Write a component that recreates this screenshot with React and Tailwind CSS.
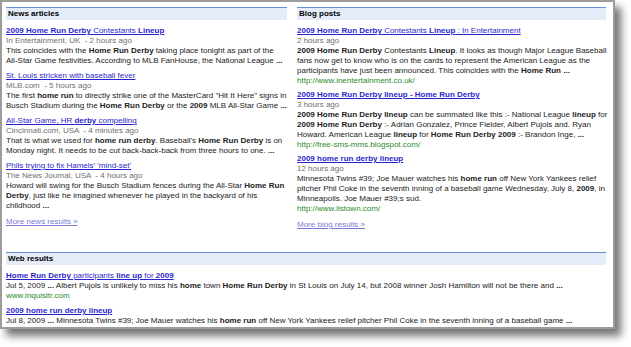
import React from 'react';

const b = (t) => <b className="font-bold">{t}</b>;

function Header({ children }) {
  return (
    <div className="h-[13px] border-t border-[#6b90da] bg-[#e5ecf9] pl-[2px] text-[8px] leading-[12px] font-bold text-black">
      {children}
    </div>
  );
}

function Title({ children }) {
  return <a className="block text-[#2a1fcc] underline whitespace-nowrap">{children}</a>;
}

function Meta({ children }) {
  return <div className="text-[#6f6f6f] whitespace-nowrap">{children}</div>;
}

function Snippet({ children }) {
  return <div className="text-[#222] whitespace-nowrap">{children}</div>;
}

function Url({ children }) {
  return <div className="text-[#2a8a2a] whitespace-nowrap">{children}</div>;
}

function More({ children }) {
  return <a className="block text-[#7a7ad6] underline whitespace-nowrap">{children}</a>;
}

export default function App() {
  return (
    <div
      className="w-[631px] h-[347px] bg-white overflow-hidden"
      style={{ fontFamily: '"Liberation Sans", Arial, sans-serif' }}
    >
      <div className="w-[615px] h-[329px] border-2 border-[#9c9c9c] bg-white shadow-[6px_7px_8px_rgba(0,0,0,0.55)] pl-[4px] pr-[7px] pt-[5px] text-[8px] leading-[10px]">
        <div className="grid grid-cols-[281px_309px] gap-[10px]">
          {/* news */}
          <div>
            <Header>News articles</Header>
            <div className="mt-[6px] flex flex-col gap-[5px]">
              <div>
                <Title>{b('2009 Home Run Derby')} Contestants {b('Lineup')}</Title>
                <Meta>In Entertainment, UK &nbsp;- 2 hours ago</Meta>
                <Snippet>
                  This coincides with the {b('Home Run Derby')} taking place tonight as part of the
                  <br />
                  All-Star Game festivities. According to MLB FanHouse, the National League {b('...')}
                </Snippet>
              </div>
              <div>
                <Title>St. Louis stricken with baseball fever</Title>
                <Meta>MLB.com &nbsp;- 5 hours ago</Meta>
                <Snippet>
                  The first {b('home run')} to directly strike one of the MasterCard "Hit It Here" signs in
                  <br />
                  Busch Stadium during the {b('Home Run Derby')} or the {b('2009')} MLB All-Star Game {b('...')}
                </Snippet>
              </div>
              <div>
                <Title>All-Star Game, HR {b('derby')} compelling</Title>
                <Meta>Cincinnati.com, USA &nbsp;- 4 minutes ago</Meta>
                <Snippet>
                  That is what we used for {b('home run derby')}. Baseball's {b('Home Run Derby')} is on
                  <br />
                  Monday night. It needs to be cut back-back-back from three hours to one. {b('...')}
                </Snippet>
              </div>
              <div>
                <Title>Phils trying to fix Hamels' 'mind-set'</Title>
                <Meta>The News Journal, USA &nbsp;- 4 hours ago</Meta>
                <Snippet>
                  Howard will swing for the Busch Stadium fences during the All-Star {b('Home Run')}
                  <br />
                  {b('Derby')}, just like he imagined whenever he played in the backyard of his
                  <br />
                  childhood {b('...')}
                </Snippet>
              </div>
            </div>
            <div className="mt-[6px]">
              <More>More news results »</More>
            </div>
          </div>

          {/* blogs */}
          <div>
            <Header>Blog posts</Header>
            <div className="mt-[6px] flex flex-col gap-[4px]">
              <div>
                <Title>{b('2009 Home Run Derby')} Contestants {b('Lineup')} : In Entertainment</Title>
                <Meta>2 hours ago</Meta>
                <Snippet>
                  {b('2009 Home Run Derby')} Contestants {b('Lineup')}. It looks as though Major League Baseball
                  <br />
                  fans now get to know who is on the cards to represent the American League as the
                  <br />
                  participants have just been announced. This coincides with the {b('Home Run ...')}
                </Snippet>
                <Url>http://www.inentertainment.co.uk/</Url>
              </div>
              <div>
                <Title>{b('2009 Home Run Derby lineup - Home Run Derby')}</Title>
                <Meta>3 hours ago</Meta>
                <Snippet>
                  {b('2009 Home Run Derby lineup')} can be summated like this :- National League {b('lineup')} for
                  <br />
                  {b('2009 Home Run Derby')} :- Adrian Gonzalez, Prince Fielder, Albert Pujols and. Ryan
                  <br />
                  Howard. American League {b('lineup')} for {b('Home Run Derby 2009')} :- Brandon Inge, {b('...')}
                </Snippet>
                <Url>http://free-sms-mms.blogspot.com/</Url>
              </div>
              <div>
                <Title>{b('2009 home run derby lineup')}</Title>
                <Meta>12 hours ago</Meta>
                <Snippet>
                  Minnesota Twins #39; Joe Mauer watches his {b('home run')} off New York Yankees relief
                  <br />
                  pitcher Phil Coke in the seventh inning of a baseball game Wednesday, July 8, {b('2009')}, in
                  <br />
                  Minneapolis. Joe Mauer #39;s sud.
                </Snippet>
                <Url>http://www.listown.com/</Url>
              </div>
            </div>
            <div className="mt-[6px]">
              <More>More blog results »</More>
            </div>
          </div>
        </div>

        {/* web */}
        <div className="mt-[22px] w-[600px]">
          <Header>Web results</Header>
          <div className="mt-[6px] flex flex-col gap-[5px]">
            <div>
              <Title>{b('Home Run Derby')} participants {b('line up')} for {b('2009')}</Title>
              <Snippet>
                Jul 5, 2009 {b('...')} Albert Pujols is unlikely to miss his {b('home')} town {b('Home Run Derby')} in St Louis on July 14, but 2008 winner Josh Hamilton will not be there and {b('...')}
              </Snippet>
              <Url>www.inquisitr.com</Url>
            </div>
            <div>
              <Title>{b('2009 home run derby lineup')}</Title>
              <Snippet>
                Jul 8, 2009 {b('...')} Minnesota Twins #39; Joe Mauer watches his {b('home run')} off New York Yankees relief pitcher Phil Coke in the seventh inning of a baseball game {b('...')}
              </Snippet>
            </div>
          </div>
        </div>
      </div>
    </div>
  );
}
